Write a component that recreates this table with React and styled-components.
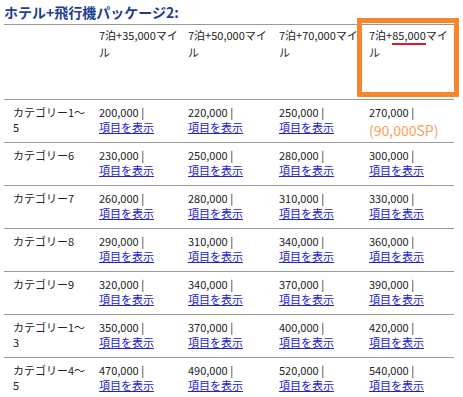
import styled, { createGlobalStyle } from 'styled-components';

const GlobalStyle = createGlobalStyle`
  body {
    margin: 0;
    background: #fff;
    font-family: 'Noto Sans CJK JP', 'Liberation Sans', sans-serif;
    color: #222;
  }
`;

const MILES = ['35,000', '50,000', '70,000', '85,000'];

const ROWS = [
  { cat: ['カテゴリー1～', '5'], prices: ['200,000', '220,000', '250,000', '270,000'], sp: '(90,000SP)' },
  { cat: ['カテゴリー6'], prices: ['230,000', '250,000', '280,000', '300,000'] },
  { cat: ['カテゴリー7'], prices: ['260,000', '280,000', '310,000', '330,000'] },
  { cat: ['カテゴリー8'], prices: ['290,000', '310,000', '340,000', '360,000'] },
  { cat: ['カテゴリー9'], prices: ['320,000', '340,000', '370,000', '390,000'] },
  { cat: ['カテゴリー1～', '3'], prices: ['350,000', '370,000', '400,000', '420,000'] },
  { cat: ['カテゴリー4～', '5'], prices: ['470,000', '490,000', '520,000', '540,000'] },
];

const App = () => {
  return (
    <>
      <GlobalStyle />
      <Page>
        <Title>ホテル+飛行機パッケージ2:</Title>
        <Table>
          <HeaderRow>
            <Cell />
            {MILES.map((m, i) => {
              const last = i === MILES.length - 1;
              return (
                <HeadCell key={m}>
                  7泊+{last ? <Marked>{m}</Marked> : m}マイ
                  <br />ル
                  {last && <Highlight />}
                </HeadCell>
              );
            })}
          </HeaderRow>
          {ROWS.map((row) => (
            <Row key={row.cat.join('')}>
              <Cell>
                {row.cat.map((line, i) => (
                  <Line key={i}>{line}</Line>
                ))}
              </Cell>
              {row.prices.map((p, i) => {
                const isSp = row.sp && i === row.prices.length - 1;
                return (
                  <Cell key={i}>
                    <Line>{p} |</Line>
                    {isSp ? <Points>{row.sp}</Points> : <Line><Link href="#">項目を表示</Link></Line>}
                  </Cell>
                );
              })}
            </Row>
          ))}
        </Table>
      </Page>
    </>
  );
};

const Page = styled.div`
  padding: 0 0 0 4px;
`;

const Title = styled.h2`
  margin: 0 0 3px;
  padding-top: 3px;
  font-size: 14px;
  line-height: 18px;
  font-weight: bold;
  color: #1d3f8f;
`;

const Table = styled.div`
  width: 450px;
`;

const Row = styled.div`
  display: grid;
  grid-template-columns: 86px 89px 91px 90px 94px;
  border-top: 1px solid #999;
  padding: 5px 0 7px;
  font-size: 11px;
  line-height: 15px;
`;

const HeaderRow = styled(Row)`
  height: 72px;
  padding: 2px 0 0;
  line-height: 17px;
  box-sizing: content-box;
`;

const Cell = styled.div`
  padding-left: 9px;
  white-space: nowrap;
`;

const Line = styled.div`
  height: 15px;
`;

const HeadCell = styled(Cell)`
  position: relative;
`;

const Marked = styled.span`
  border-bottom: 2px solid #e3182c;
`;

const Highlight = styled.div`
  position: absolute;
  top: -9px;
  bottom: 2px;
  left: -3px;
  right: -5px;
  border: 5px solid #f7862c;
  z-index: 1;
`;

const Link = styled.a`
  color: #2323c8;
  text-decoration: underline;
`;

const Points = styled.div`
  height: 15px;
  margin-top: 3px;
  margin-bottom: -3px;
  color: #f9a055;
  font-size: 14px;
  line-height: 15px;
`;

export default App;
